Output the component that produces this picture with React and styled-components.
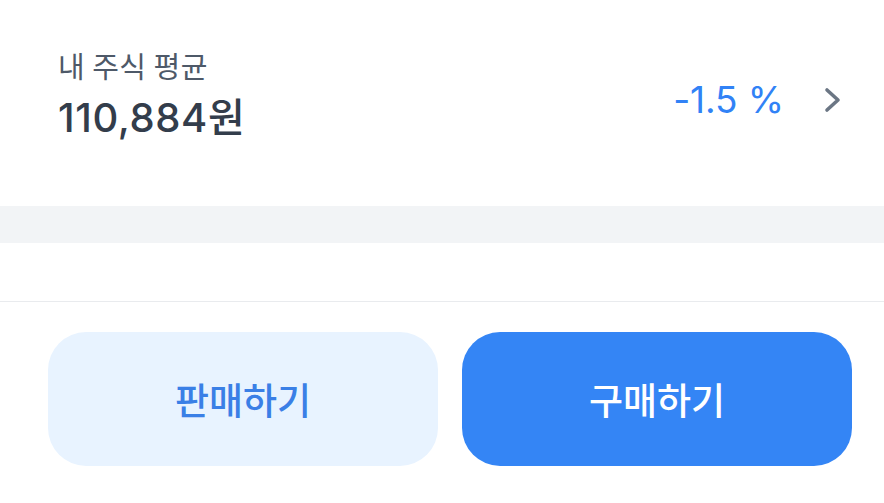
import React from "react";
import styled, { createGlobalStyle } from "styled-components";

const Global = createGlobalStyle`
  html, body { margin: 0; padding: 0; background: #ffffff; }
  body {
    font-family: Inter, "Noto Sans CJK KR", sans-serif;
    -webkit-font-smoothing: antialiased;
  }
  * { box-sizing: border-box; }
`;

const Page = styled.div`
  width: 884px;
  height: 503px;
  display: flex;
  flex-direction: column;
  background: #ffffff;
  overflow: hidden;
`;

const Summary = styled.section`
  height: 206px;
  display: flex;
  align-items: flex-start;
  justify-content: space-between;
  padding: 46px 42px 0 58px;
`;

const Info = styled.div`
  display: flex;
  flex-direction: column;
  gap: 10px;
`;

const Label = styled.div`
  font-family: "Noto Sans CJK KR", sans-serif;
  font-size: 29px;
  line-height: 38px;
  font-weight: 400;
  color: #4e5968;
  letter-spacing: 0.5px;
`;

const Value = styled.div`
  font-family: Inter, "Noto Sans CJK KR", sans-serif;
  font-size: 40px;
  line-height: 48px;
  font-weight: 500;
  color: #333d4b;
  letter-spacing: 0.6px;
`;

const Trend = styled.div`
  display: flex;
  align-items: center;
  gap: 40px;
  margin-top: 32px;
`;

const Rate = styled.span`
  font-family: Inter, sans-serif;
  font-size: 37px;
  line-height: 44px;
  font-weight: 400;
  color: #3182f6;
  letter-spacing: -0.1px;
`;

const Chevron = styled.svg`
  width: 18px;
  height: 26px;
  display: block;
`;

const Band = styled.div`
  height: 37px;
  background: #f2f4f6;
`;

const Spacer = styled.div`
  height: 59px;
  border-bottom: 1px solid #e9ebee;
`;

const Actions = styled.div`
  display: grid;
  grid-template-columns: 1fr 1fr;
  gap: 24px;
  padding: 30px 32px 0 48px;
`;

const ActionButton = styled.button`
  height: 134px;
  border: none;
  border-radius: 38px;
  background: ${(p) => (p.$primary ? "#3485f5" : "#e8f3ff")};
  color: ${(p) => (p.$primary ? "#ffffff" : "#3a7fe6")};
  font-family: "Noto Sans CJK KR", sans-serif;
  font-size: 37px;
  font-weight: 500;
  letter-spacing: 0px;
  display: flex;
  align-items: center;
  justify-content: center;
  padding: 0;
  cursor: pointer;
`;

export default function App() {
  return (
    <>
      <Global />
      <Page>
        <Summary>
          <Info>
            <Label>내 주식 평균</Label>
            <Value>110,884원</Value>
          </Info>
          <Trend>
            <Rate>-1.5 %</Rate>
            <Chevron viewBox="0 0 18 26" fill="none">
              <path
                d="M3 3 L14 13 L3 23"
                stroke="#6b7684"
                strokeWidth="3.6"
                strokeLinecap="round"
                strokeLinejoin="round"
              />
            </Chevron>
          </Trend>
        </Summary>
        <Band />
        <Spacer />
        <Actions>
          <ActionButton>판매하기</ActionButton>
          <ActionButton $primary>구매하기</ActionButton>
        </Actions>
      </Page>
    </>
  );
}
